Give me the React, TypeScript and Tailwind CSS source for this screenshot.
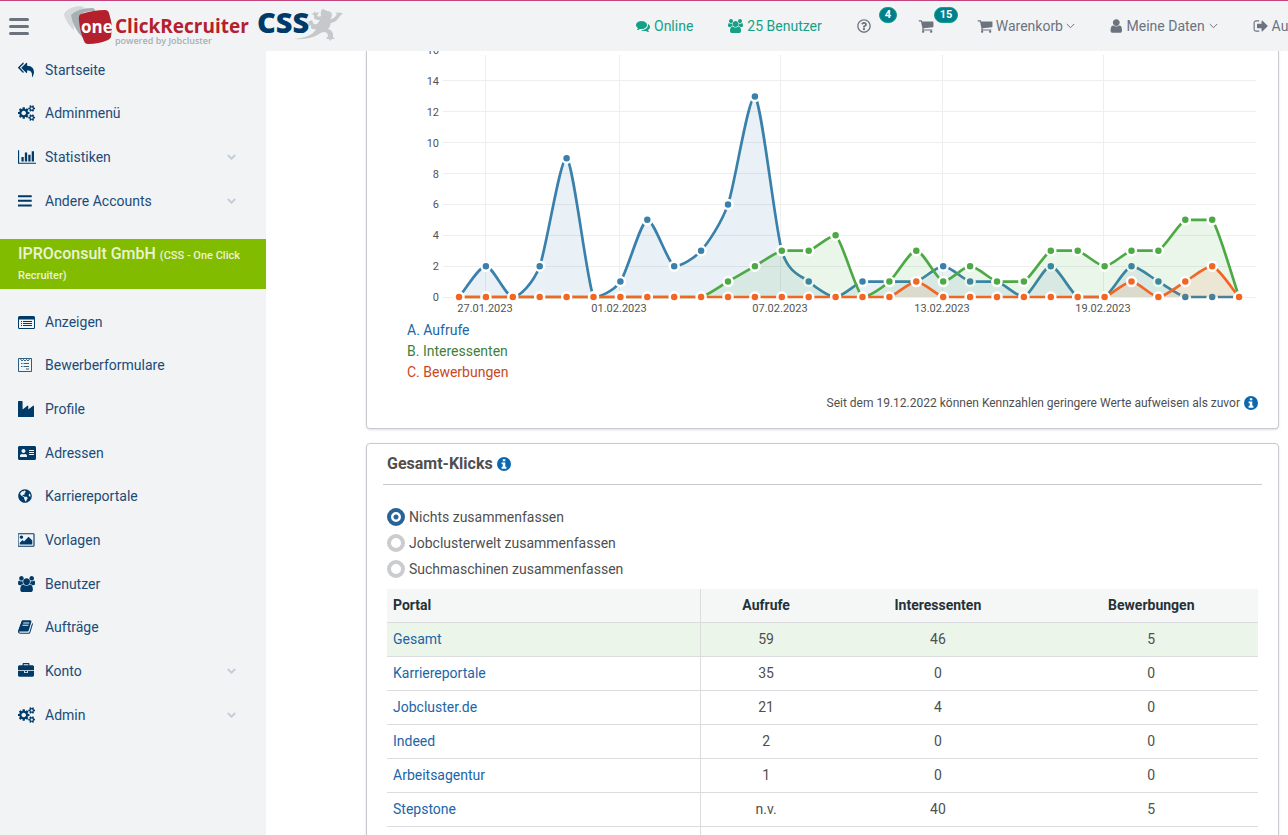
import { FaAddressCard, FaGlobeAmericas, FaRegQuestionCircle } from "react-icons/fa";
import type { ReactNode } from "react";

const replyAll =
  "M640 1082v70q0 42-39 59-13 5-25 5-27 0-45-19l-512-512q-19-19-19-45t19-45l512-512q29-31 70-14 39 17 39 59v69l-397 398q-19 19-19 45t19 45zm1152 58q0 58-17 133.5t-38.5 138-48 125-40.5 90.5l-20 40q-8 17-28 17-6 0-9-1-25-8-23-34 43-400-106-565-64-71-170.5-110.5t-267.5-52.5v251q0 42-39 59-13 5-25 5-27 0-45-19l-512-512q-19-19-19-45t19-45l512-512q29-31 70-14 39 17 39 59v262q411 28 599 221 169 173 169 509z";
const cogs =
  "M896 896q0-106-75-181t-181-75-181 75-75 181 75 181 181 75 181-75 75-181zm768 512q0-52-38-90t-90-38-90 38-38 90q0 53 37.5 90.5t90.5 37.5 90.5-37.5 37.5-90.5zm0-1024q0-52-38-90t-90-38-90 38-38 90q0 53 37.5 90.5t90.5 37.5 90.5-37.5 37.5-90.5zm-384 421v185q0 10-7 19.5t-16 10.5l-155 24q-11 35-32 76 34 48 90 115 7 11 7 20 0 12-7 19-23 30-82.5 89.5t-78.5 59.5q-11 0-21-7l-115-90q-37 19-77 31-11 108-23 155-7 24-30 24h-186q-11 0-20-7.5t-10-17.5l-23-153q-34-10-75-31l-118 89q-7 7-20 7-11 0-21-8-144-133-144-160 0-9 7-19 10-14 41-53t47-61q-23-44-35-82l-152-24q-10-1-17-9.5t-7-19.5v-185q0-10 7-19.5t16-10.5l155-24q11-35 32-76-34-48-90-115-7-11-7-20 0-12 7-20 22-30 82-89t79-59q11 0 21 7l115 90q34-18 77-32 11-108 23-154 7-24 30-24h186q11 0 20 7.5t10 17.5l23 153q34 10 75 31l118-89q8-7 20-7 11 0 21 8 144 133 144 160 0 8-7 19-12 16-42 54t-45 60q23 48 34 82l152 23q10 2 17 10.5t7 19.5zm640 533v140q0 16-149 31-12 27-30 52 51 113 51 138 0 4-4 7-122 71-124 71-8 0-46-47t-52-68q-20 2-30 2t-30-2q-14 21-52 68t-46 47q-2 0-124-71-4-3-4-7 0-25 51-138-18-25-30-52-149-15-149-31v-140q0-16 149-31 13-29 30-52-51-113-51-138 0-4 4-7 4-2 35-20t59-34 30-16q8 0 46 46.5t52 67.5q20-2 30-2t30 2q51-71 92-112l6-2q4 0 124 70 4 3 4 7 0 25-51 138 17 23 30 52 149 15 149 31zm0-1024v140q0 16-149 31-12 27-30 52 51 113 51 138 0 4-4 7-122 71-124 71-8 0-46-47t-52-68q-20 2-30 2t-30-2q-14 21-52 68t-46 47q-2 0-124-71-4-3-4-7 0-25 51-138-18-25-30-52-149-15-149-31v-140q0-16 149-31 13-29 30-52-51-113-51-138 0-4 4-7 4-2 35-20t59-34 30-16q8 0 46 46.5t52 67.5q20-2 30-2t30 2q51-71 92-112l6-2q4 0 124 70 4 3 4 7 0 25-51 138 17 23 30 52 149 15 149 31z";
const barChart =
  "M640 896v512h-256v-512h256zm384-512v1024h-256v-1024h256zm1024 1152v128h-2048v-1536h128v1408h1920zm-640-896v768h-256v-768h256zm384-384v1152h-256v-1152h256z";
const bars = "M0 256h1536v224H0zM0 768h1536v224H0zM0 1280h1536v224H0z";
const industry =
  "M448 0q26 0 45 19t19 45v891l536-429q17-14 40-14 26 0 45 19t19 45v379l536-429q17-14 40-14 26 0 45 19t19 45v1152q0 26-19 45t-45 19h-1664q-26 0-45-19t-19-45v-1664q0-26 19-45t45-19h384z";
const picture =
  "M576 576q0 80-56 136t-136 56-136-56-56-136 56-136 136-56 136 56 56 136zm1024 384v448h-1408v-192l320-320 160 160 512-512zm96-704h-1600q-13 0-22.5 9.5t-9.5 22.5v1216q0 13 9.5 22.5t22.5 9.5h1600q13 0 22.5-9.5t9.5-22.5v-1216q0-13-9.5-22.5t-22.5-9.5zm160 32v1216q0 66-47 113t-113 47h-1600q-66 0-113-47t-47-113v-1216q0-66 47-113t113-47h1600q66 0 113 47t47 113z";
const users =
  "M593 896q-162 5-265 128h-134q-82 0-138-40.5t-56-118.5q0-353 124-353 6 0 43.5 21t97.5 42.5 119 21.5q67 0 133-23-5 37-5 66 0 139 81 256zm1071 637q0 120-73 189.5t-194 69.5h-874q-121 0-194-69.5t-73-189.5q0-53 3.5-103.5t14-109 26.5-108.5 43-97.5 62-81 85.5-53.5 111.5-20q10 0 43 21.5t73 48 107 48 135 21.5 135-21.5 107-48 73-48 43-21.5q61 0 111.5 20t85.5 53.5 62 81 43 97.5 26.5 108.5 14 109 3.5 103.5zm-1024-1277q0 106-75 181t-181 75-181-75-75-181 75-181 181-75 181 75 75 181zm704 384q0 159-112.5 271.5t-271.5 112.5-271.5-112.5-112.5-271.5 112.5-271.5 271.5-112.5 271.5 112.5 112.5 271.5zm576 225q0 78-56 118.5t-138 40.5h-134q-103-123-265-128 81-117 81-256 0-29-5-66 66 23 133 23 59 0 119-21.5t97.5-42.5 43.5-21q124 0 124 353zm-128-609q0 106-75 181t-181 75-181-75-75-181 75-181 181-75 181 75 75 181z";
const book =
  "M1639 478q40 57 18 129l-275 906q-19 64-76.5 107.5t-122.5 43.5h-923q-77 0-148.5-53.5t-99.5-131.5q-24-67-2-127 0-4 3-27t4-37q1-8-3-21.5t-3-19.5q2-11 8-21t16.5-23.5 16.5-23.5q23-38 45-91.5t30-91.5q3-10 .5-30t-.5-28q3-11 17-28t17-23q21-36 42-92t25-90q1-9-2.5-32t.5-28q4-13 22-30.5t22-22.5q19-26 42.5-84.5t27.5-96.5q1-8-3-25.5t-2-26.5q2-8 9-18t18-23 17-21q8-12 16.5-30.5t15-35 16-36 19.5-32 26.5-23.5 36-11.5 47.5 5.5l-1 3q38-9 51-9h761q74 0 114 56t18 130l-274 906q-36 119-71.5 153.5t-128.5 34.5h-869q-27 0-38 15-11 16-1 43 24 70 144 70h923q29 0 56-15.5t35-41.5l300-987q7-22 5-57 38 15 59 43zm-1064 2q-4 13 2 22.5t20 9.5h608q13 0 25.5-9.5t16.5-22.5l21-64q4-13-2-22.5t-20-9.5h-608q-13 0-25.5 9.5t-16.5 22.5zm-83 256q-4 13 2 22.5t20 9.5h608q13 0 25.5-9.5t16.5-22.5l21-64q4-13-2-22.5t-20-9.5h-608q-13 0-25.5 9.5t-16.5 22.5z";
const briefcase =
  "M640 256h512v-128h-512v128zm1152 640v480q0 66-47 113t-113 47h-1472q-66 0-113-47t-47-113v-480h672v160q0 26 19 45t45 19h320q26 0 45-19t19-45v-160h672zm-768 0v128h-256v-128h256zm768-480v384h-1792v-384q0-66 47-113t113-47h352v-160q0-40 28-68t68-28h576q40 0 68 28t28 68v160h352q66 0 113 47t47 113z";
const comments =
  "M1408 768q0 139-94 257t-256.5 186.5-353.5 68.5q-86 0-176-16-124 88-278 128-36 9-86 16h-3q-11 0-20.5-8t-11.5-21q-1-3-1-6.5t.5-6.5 2-6l2.5-5 3.5-5.5 4-5 4.5-5 4-4.5q5-6 23-25t26-29.5 22.5-29 25-38.5 20.5-44q-124-72-195-177t-71-224q0-139 94-257t256.5-186.5 353.5-68.5 353.5 68.5 256.5 186.5 94 257zm384 256q0 120-71 224.5t-195 176.5q10 24 20.5 44t25 38.5 22.5 29 26 29.5 23 25q1 1 4 4.5t4.5 5 4 5 3.5 5.5l2.5 5 2 6 .5 6.5-1 6.5q-3 14-13 22t-22 7q-50-7-86-16-154-40-278-128-90 16-176 16-271 0-472-132 58 4 88 4 161 0 309-45t264-129q125-92 192-212t67-254q0-77-23-152 129 71 204 178t75 230z";
const cart =
  "M704 1536q0 52-38 90t-90 38-90-38-38-90 38-90 90-38 90 38 38 90zm896 0q0 52-38 90t-90 38-90-38-38-90 38-90 90-38 90 38 38 90zm128-1088v512q0 24-16.5 42.5t-40.5 21.5l-1044 122q13 60 13 70 0 16-24 64h920q26 0 45 19t19 45-19 45-45 19h-1024q-26 0-45-19t-19-45q0-11 8-31.5t16-36 21.5-40 15.5-29.5l-177-823h-204q-26 0-45-19t-19-45 19-45 45-19h256q16 0 28.5 6.5t19.5 15.5 13 24.5 8 26 5.5 29.5 4.5 26h1201q26 0 45 19t19 45z";
const user =
  "M1344 1399q0 109-62.5 187t-150.5 78h-854q-88 0-150.5-78t-62.5-187q0-85 8.5-160.5t31.5-152 58.5-131 94-89 134.5-34.5q131 128 313 128t313-128q76 0 134.5 34.5t94 89 58.5 131 31.5 152 8.5 160.5zm-256-887q0 159-112.5 271.5t-271.5 112.5-271.5-112.5-112.5-271.5 112.5-271.5 271.5-112.5 271.5 112.5 112.5 271.5z";
const signOut =
  "M704 1440q0 4 1 20t.5 26.5-3 23.5-10 19.5-20.5 6.5h-320q-119 0-203.5-84.5t-84.5-203.5v-704q0-119 84.5-203.5t203.5-84.5h320q13 0 22.5 9.5t9.5 22.5q0 4 1 20t.5 26.5-3 23.5-10 19.5-20.5 6.5h-320q-66 0-113 47t-47 113v704q0 66 47 113t113 47h312l11.5 1 11.5 3 8 5.5 7 9 2 13.5zm928-544q0 26-19 45l-544 544q-19 19-45 19t-45-19-19-45v-288h-448q-26 0-45-19t-19-45v-384q0-26 19-45t45-19h448v-288q0-26 19-45t45-19 45 19l544 544q19 19 19 45z";

function Glyph({ d, w = 1792, className = "h-4" }: { d: string; w?: number; className?: string }) {
  return (
    <svg viewBox={`0 0 ${w} 1792`} className={`w-auto shrink-0 fill-current ${className}`} aria-hidden="true">
      <path d={d} />
    </svg>
  );
}

function Chevron({ className = "" }: { className?: string }) {
  return (
    <svg viewBox="0 0 9 6" className={`h-1.5 w-[9px] shrink-0 fill-none stroke-current ${className}`} aria-hidden="true">
      <path d="M.8 1l3.700 3.700L8.200 1" />
    </svg>
  );
}

function InfoIcon() {
  return (
    <svg viewBox="0 0 14 14" className="size-3.5 shrink-0" aria-hidden="true">
      <circle cx="7" cy="7" r="7" fill="#0a68b0" />
      <path d="M5.800 2.200h2.500v2H5.800zM4.600 5.400h3.700v4.400h1.100v1.900H4.600V9.800h1.200V7.300H4.600z" fill="#fff" />
    </svg>
  );
}

function ListIcon() {
  return (
    <svg viewBox="0 0 17 13" className="h-[13px] w-[17px] fill-current" aria-hidden="true">
      <path
        fillRule="evenodd"
        d="M1.500 0h14A1.500 1.500 0 0 1 17 1.500v10a1.500 1.500 0 0 1-1.500 1.500h-14A1.500 1.500 0 0 1 0 11.500v-10A1.500 1.500 0 0 1 1.500 0zM1 3.500v8q0 .5.5.5h14q.5 0 .5-.5v-8z"
      />
      <path d="M3 5h1v1H3zM5 5h9v1H5zM3 7h1v1H3zM5 7h9v1H5zM3 9h1v1H3zM5 9h9v1H5z" />
    </svg>
  );
}

function FormIcon() {
  return (
    <svg viewBox="0 0 14 14" className="size-3.5 fill-none stroke-current" aria-hidden="true">
      <path d="M.5.5h13v13H.5z" strokeOpacity=".8" />
      <path d="M2.500 1l1.500 2 1.500-1.500L7 3l1.500-1.500L10 3l1.500-2M3 5.500h1.500M5.500 5.500H11M3 8.500h1.500M5.500 8.500H11M8 11h3" strokeWidth=".8" />
    </svg>
  );
}

type Item = { label: string; icon: ReactNode; sub?: boolean };

const topItems: Item[] = [
  { label: "Startseite", icon: <Glyph d={replyAll} /> },
  { label: "Adminmenü", icon: <Glyph d={cogs} w={1920} /> },
  { label: "Statistiken", icon: <Glyph d={barChart} w={2048} />, sub: true },
  { label: "Andere Accounts", icon: <Glyph d={bars} w={1536} />, sub: true },
];

const companyItems: Item[] = [
  { label: "Anzeigen", icon: <ListIcon /> },
  { label: "Bewerberformulare", icon: <FormIcon /> },
  { label: "Profile", icon: <Glyph d={industry} /> },
  { label: "Adressen", icon: <FaAddressCard className="size-[18px]" /> },
  { label: "Karriereportale", icon: <FaGlobeAmericas className="size-3.5" /> },
  { label: "Vorlagen", icon: <Glyph d={picture} w={1920} /> },
  { label: "Benutzer", icon: <Glyph d={users} w={1920} /> },
  { label: "Aufträge", icon: <Glyph d={book} w={1664} /> },
  { label: "Konto", icon: <Glyph d={briefcase} />, sub: true },
  { label: "Admin", icon: <Glyph d={cogs} w={1920} />, sub: true },
];

function Menu({ items }: { items: Item[] }) {
  return (
    <ul>
      {items.map((item) => (
        <li key={item.label} className="h-11 nth-[3n+1]:h-[43px]">
          <a href="#" className="flex h-5 items-center pl-[18px] pr-[30px]">
            <span className="flex w-[27px] items-center text-[#003a68]">{item.icon}</span>
            <span className="flex-1">{item.label}</span>
            {item.sub && <Chevron className="stroke-2 text-[#c5ced8]" />}
          </a>
        </li>
      ))}
    </ul>
  );
}

function Logo() {
  return (
    <svg viewBox="0 0 280 50" className="h-[50px] w-[280px] shrink-0" role="img" aria-label="one ClickRecruiter CSS">
      <path d="M1 11Q7 5 17 5q4 1 4 4-9 1-12 7l1 13Q4 25 0 14z" fill="#d6d9db" />
      <path d="M7 14Q14 7 28 7q3 0 3 3-11 0-15 4 0 10 3 23Q9 27 7 14z" fill="#a7b0b3" />
      <path d="M17 13Q30 9 41 9q3 0 4 3 2 7 3 13l-1 11q-1 2-3 3-9 4-20 4-3 0-4-3-4-9-5-20-1-6 2-7z" fill="#b4202c" />
      <path
        d="M263 10q4 0 5 3 0 3-2 5 3 0 5-2l2-3-2-2 3 1 1-1 1 1 3 0-3 3-3 4q-3 3-6 3-1 4-3 6 4 1 5 5l0 3 2 2-3 0-2 2-1-2-3 0 2-3q0-3-3-4-4 0-6 2-8 6-25 5 13-1 19-6 2-2 3-4-3 1-5-1l0-3-3 1 1-3-2-1 3-1 2-1 1 3q2 2 4 1l3-4q-5 0-6-2l0-3-3-1 3-1 0-2 2 2 3-1-2 4q3 1 4 0-1-6 2-7z"
        fill="#c6c9cc"
      />
      <g className="font-['Open_Sans']">
        <text x="17" y="32" fontSize="17" fontWeight="700" fill="#fff">one</text>
        <text x="51" y="32" fontSize="19" fontWeight="700" fill="#b4202c">ClickRecruiter</text>
        <text x="51" y="43" fontSize="9" fontWeight="600" fill="#a7b0b3">powered by Jobcluster</text>
        <text x="193" y="32" fontSize="29" fontWeight="800" fill="#003a68">CSS</text>
      </g>
    </svg>
  );
}

function Badge({ children, className }: { children: ReactNode; className: string }) {
  return (
    <span className={`absolute top-1.5 rounded-full border border-[#16a085] bg-[#00808c] px-[5px] text-[11px] leading-[14px] font-bold text-white ${className}`}>
      {children}
    </span>
  );
}

function Header() {
  return (
    <header className="flex h-[51px] shrink-0 items-center overflow-hidden border-t border-[#c2447c] bg-[#f1f3f5] text-[#6c737f]">
      <button type="button" aria-label="Menü" className="ml-[9px] flex w-5 shrink-0 flex-col gap-1">
        <span className="h-[3px] rounded-xs bg-current" />
        <span className="h-[3px] rounded-xs bg-current" />
        <span className="h-[3px] rounded-xs bg-current" />
      </button>
      <a href="#" className="ml-[35px] shrink-0">
        <Logo />
      </a>
      <nav className="ml-[292px] flex h-full shrink-0 items-center gap-[35px]">
        <a href="#" className="flex items-center gap-1 text-[#16a085]">
          <Glyph d={comments} className="h-3.5" />
          Online
        </a>
        <a href="#" className="flex items-center gap-1 text-[#16a085]">
          <Glyph d={users} w={1920} className="h-3.5" />
          25 Benutzer
        </a>
        <button type="button" aria-label="Hilfe" className="relative flex h-full items-center pr-3">
          <FaRegQuestionCircle className="size-3.5" />
          <Badge className="left-[22px]">4</Badge>
        </button>
        <button type="button" aria-label="Warenkorb öffnen" className="relative flex h-full items-center pr-2">
          <Glyph d={cart} />
          <Badge className="left-4">15</Badge>
        </button>
        <button type="button" className="flex items-center gap-[3px]">
          <Glyph d={cart} />
          Warenkorb
          <Chevron />
        </button>
        <button type="button" className="flex items-center gap-1">
          <Glyph d={user} w={1408} />
          Meine Daten
          <Chevron />
        </button>
        <a href="#" className="flex items-center gap-1">
          <Glyph d={signOut} w={1664} />
          Ausloggen
        </a>
      </nav>
    </header>
  );
}

const blue = [0, 2, 0, 2, 9, 0, 1, 5, 2, 3, 6, 13, 3, 1, 0, 1, 1, 1, 2, 1, 1, 0, 2, 0, 0, 2, 1, 0, 0, 0];
const green = [0, 0, 0, 0, 0, 0, 0, 0, 0, 0, 1, 2, 3, 3, 4, 0, 1, 3, 1, 2, 1, 1, 3, 3, 2, 3, 3, 5, 5, 0];
const orange = [0, 0, 0, 0, 0, 0, 0, 0, 0, 0, 0, 0, 0, 0, 0, 0, 0, 1, 0, 0, 0, 0, 0, 0, 0, 1, 0, 1, 2, 0];

const BASE = 246;
const STEP = 26.9;
const px = (i: number) => 52 + i * STEP;
const py = (v: number) => BASE - v * 15.43;

const dates = [
  { x: 78, label: "27.01.2023" },
  { x: 212, label: "01.02.2023" },
  { x: 373, label: "07.02.2023" },
  { x: 535, label: "13.02.2023" },
  { x: 696, label: "19.02.2023" },
];

// control points never leave the value range of their segment, so flat runs stay flat
function smooth(values: number[]) {
  const last = values.length - 1;
  const slope = (i: number) => {
    const a = Math.max(0, i - 1);
    const b = Math.min(last, i + 1);
    return (values[b] - values[a]) / (b - a);
  };
  let d = `M${px(0)} ${py(values[0])}`;
  for (let i = 1; i <= last; i++) {
    const from = values[i - 1];
    const to = values[i];
    const clamp = (v: number) => Math.min(Math.max(from, to), Math.max(Math.min(from, to), v));
    const c1 = clamp(from + slope(i - 1) / 4);
    const c2 = clamp(to - slope(i) / 4);
    d += `C${px(i - 1) + STEP / 4} ${py(c1)} ${px(i) - STEP / 4} ${py(c2)} ${px(i)} ${py(to)}`;
  }
  return d;
}

function Series({ values, color }: { values: number[]; color: string }) {
  const d = smooth(values);
  return (
    <g>
      <path d={`${d}L${px(29)} ${BASE}L${px(0)} ${BASE}Z`} fill={color} fillOpacity="0.11" />
      <path d={d} fill="none" stroke={color} strokeWidth="2.700" />
      {values.map((v, i) => (
        <circle key={i} cx={px(i)} cy={py(v)} r="4.500" fill={color} stroke="#fff" strokeWidth="2.500" />
      ))}
    </g>
  );
}

function Chart() {
  return (
    <svg viewBox="0 0 851 269" className="w-full font-[Roboto] text-[11px]" role="img" aria-label="Klicks pro Tag">
      {[0, 2, 4, 6, 8, 10, 12, 14, 16].map((v) => (
        <g key={v}>
          {v < 16 && <path d={`M36 ${Math.floor(py(v)) + 0.5}H849`} stroke="#eee" />}
          <text x="32" y={py(v) + 4} textAnchor="end" fill="#545454">{v}</text>
        </g>
      ))}
      {dates.map(({ x, label }) => (
        <g key={label}>
          <path d={`M${x + 0.5} 4V${BASE}`} stroke="#eee" />
          <text x={x} y={BASE + 15} textAnchor="middle" fill="#545454">{label}</text>
        </g>
      ))}
      <Series values={blue} color="#3980ab" />
      <Series values={green} color="#4da944" />
      <Series values={orange} color="#f26522" />
    </svg>
  );
}

const options = ["Nichts zusammenfassen", "Jobclusterwelt zusammenfassen", "Suchmaschinen zusammenfassen"];

const rows = [
  ["Gesamt", "59", "46", "5"],
  ["Karriereportale", "35", "0", "0"],
  ["Jobcluster.de", "21", "4", "0"],
  ["Indeed", "2", "0", "0"],
  ["Arbeitsagentur", "1", "0", "0"],
  ["Stepstone", "n.v.", "40", "5"],
  ["", "", "", ""],
];

export default function App() {
  return (
    <div className="flex h-screen flex-col overflow-hidden bg-white font-[Roboto,sans-serif] text-sm text-[#4f4f4f]">
      <Header />
      <div className="flex min-h-0 flex-1">
        <nav className="w-[266px] shrink-0 bg-[#f1f3f5] pt-[9px] text-[#1c4b77]">
          <Menu items={topItems} />
          <h2 className="mt-[5px] mb-[23px] bg-[#82bc00] px-[18px] py-[5px] text-base leading-5 font-medium text-[#eaf3d5]">
            IPROconsult GmbH <small className="text-[11px] leading-none">(CSS - One Click Recruiter)</small>
          </h2>
          <Menu items={companyItems} />
        </nav>

        <main className="min-w-0 flex-1 overflow-hidden pr-[9px] pl-[100px]">
          <section className="rounded-b border border-t-0 border-[#c8cad0] pr-5 pb-[15px] pl-10 shadow-sm">
            <Chart />
            <ol className="leading-[21px]">
              <li className="text-[#1a66a8]">A. Aufrufe</li>
              <li className="text-[#3f7f3a]">B. Interessenten</li>
              <li className="text-[#c9481c]">C. Bewerbungen</li>
            </ol>
            <p className="mt-2.5 flex items-center justify-end gap-1 text-xs leading-5">
              Seit dem 19.12.2022 können Kennzahlen geringere Werte aufweisen als zuvor
              <InfoIcon />
            </p>
          </section>

          <section className="mt-3.5 rounded border border-[#c8cad0] px-4 shadow-sm">
            <h2 className="flex h-[41px] items-center gap-1 border-b border-[#c8cad0] px-1 text-base font-bold">
              Gesamt-Klicks
              <InfoIcon />
            </h2>
            <div className="px-1 pt-[19px]">
              {options.map((label, i) => (
                <label key={label} className="flex h-[26px] items-center gap-1">
                  <input
                    type="radio"
                    name="group"
                    defaultChecked={i === 0}
                    className="size-[18px] appearance-none rounded-full border-4 border-[#cbccce] bg-white checked:border-[#2a6496] checked:bg-[radial-gradient(circle,#2a6496_2px,#fff_3px)]"
                  />
                  {label}
                </label>
              ))}
              <table className="mt-[7px] w-full table-fixed text-center">
                <thead>
                  <tr className="h-[33px] border-b border-[#dadcdd] bg-[#f5f7f7] text-[#263238]">
                    <th className="w-[36%] border-r border-[#dadcdd] px-1.5 text-left">Portal</th>
                    <th className="w-[15%]">Aufrufe</th>
                    <th>Interessenten</th>
                    <th>Bewerbungen</th>
                  </tr>
                </thead>
                <tbody>
                  {rows.map(([portal, views, leads, applications], i) => (
                    <tr key={portal} className={`h-[34px] border-b border-[#dadcdd] ${i === 0 ? "bg-[#ebf5e9]" : ""}`}>
                      <td className="border-r border-[#dadcdd] px-1.5 text-left">
                        {portal && <a href="#" className="text-[#1a66a8]">{portal}</a>}
                      </td>
                      <td>{views}</td>
                      <td>{leads}</td>
                      <td>{applications}</td>
                    </tr>
                  ))}
                </tbody>
              </table>
            </div>
          </section>
        </main>
      </div>
    </div>
  );
}
